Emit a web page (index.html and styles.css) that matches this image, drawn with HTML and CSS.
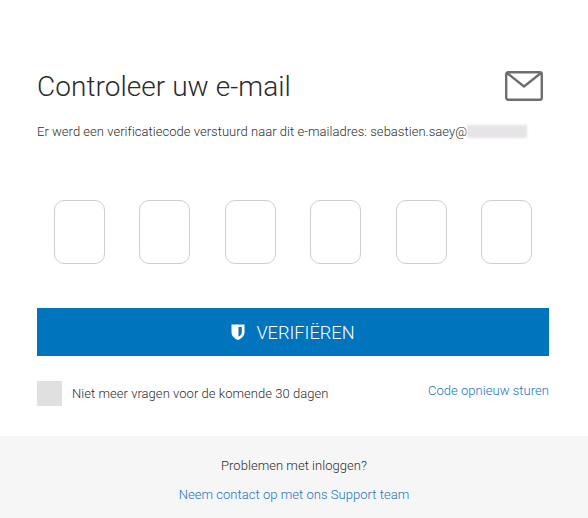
FILE: index.html
```html
<!DOCTYPE html>
<html lang="en">

<head>
    <meta charset="UTF-8">
    <meta name="viewport" content="width=device-width, initial-scale=1.0">
    <link rel="stylesheet" href="styles.css">
    <title>Controleer uw e-mail</title>
</head>

<body>
    <div class="card">
        <div class="card-head">
            <h1>Controleer uw e-mail</h1>
            <svg class="mail-icon" width="38" height="30" viewBox="0 0 38 30" fill="none" stroke="#6e6e6e" stroke-width="2.4">
                <rect x="1.2" y="1.2" width="35.6" height="27.6" rx="2"></rect>
                <path d="M2 2 L19 15.5 L36 2"></path>
            </svg>
        </div>
        <p class="intro">Er werd een verificatiecode verstuurd naar dit e-mailadres: sebastien.saey@<span class="blurred"></span></p>

        <form class="code-form" onsubmit="return false">
            <div class="code-row">
                <input class="code-box" type="text" maxlength="1">
                <input class="code-box" type="text" maxlength="1">
                <input class="code-box" type="text" maxlength="1">
                <input class="code-box" type="text" maxlength="1">
                <input class="code-box" type="text" maxlength="1">
                <input class="code-box" type="text" maxlength="1">
            </div>

            <button type="submit" class="verify-button">
                <svg width="14" height="16" viewBox="0 0 14 16">
                    <path fill-rule="evenodd" fill="#fff" d="M0.5 0.5 H13.5 V8 C13.5 12 10.5 14.5 7 16 C3.5 14.5 0.5 12 0.5 8 Z M7.5 3 H10.8 V8 C10.8 10.2 9.4 11.8 7.5 12.8 Z"></path>
                </svg>
                VERIFIËREN
            </button>

            <div class="options">
                <label class="remember"><span class="check"></span>Niet meer vragen voor de komende 30 dagen</label>
                <a class="link resend" href="#">Code opnieuw sturen</a>
            </div>
        </form>
    </div>

    <div class="support">
        <p>Problemen met inloggen?</p>
        <a class="link" href="#">Neem contact op met ons Support team</a>
    </div>
</body>

</html>
```

FILE: styles.css
```css
html, body {
    margin: 0;
    height: 100%;
}

body {
    font-family: Roboto, Arial, sans-serif;
    font-weight: 300;
    letter-spacing: 0.04px;
    color: #2e2e2e;
    background-color: #fff;
    display: flex;
    flex-direction: column;
    font-size: 13px;
}

.card {
    height: 436px;
    box-sizing: border-box;
    padding: 70px 39px 0 37px;
}

.card-head {
    display: flex;
    justify-content: space-between;
    align-items: center;
    height: 34px;
}

h1 {
    margin: 0;
    font-size: 28px;
    font-weight: 300;
    letter-spacing: 0.05px;
    color: #2b2b2b;
    position: relative;
    top: -1px;
}

.mail-icon {
    margin-right: 6px;
    margin-top: -2px;
}

.intro {
    margin: 19px 0 0;
    font-size: 13px;
    line-height: 18px;
    letter-spacing: 0.03px;
    white-space: nowrap;
}

.blurred {
    display: inline-block;
    width: 60px;
    height: 13px;
    vertical-align: -2px;
    background-color: #e6e4e6;
    filter: blur(1px);
}

.code-row {
    display: flex;
    justify-content: space-between;
    margin: 59px 17px 0;
}

.code-box {
    box-sizing: border-box;
    width: 51px;
    height: 64px;
    padding: 0;
    border: 1px solid #cfcfcf;
    border-radius: 10px;
    background-color: #fff;
}

.verify-button {
    display: flex;
    align-items: center;
    justify-content: center;
    gap: 11px;
    width: 100%;
    height: 48px;
    margin-top: 44px;
    border: none;
    background-color: #0074bd;
    color: white;
    font-family: inherit;
    font-size: 18.2px;
    font-weight: 300;
    cursor: pointer;
}

.options {
    display: flex;
    justify-content: space-between;
    margin-top: 25px;
}

.remember {
    display: flex;
    align-items: center;
    gap: 10px;
}

.check {
    width: 25px;
    height: 25px;
    background-color: #e0e0e0;
}

.link {
    color: #1a75bb;
    text-decoration: none;
}

.resend {
    margin-top: 2px;
}

.support {
    flex: 1;
    background-color: #f6f6f6;
    text-align: center;
    padding-top: 22px;
}

.support p {
    margin: 0 0 13px;
    line-height: 16px;
}
```
